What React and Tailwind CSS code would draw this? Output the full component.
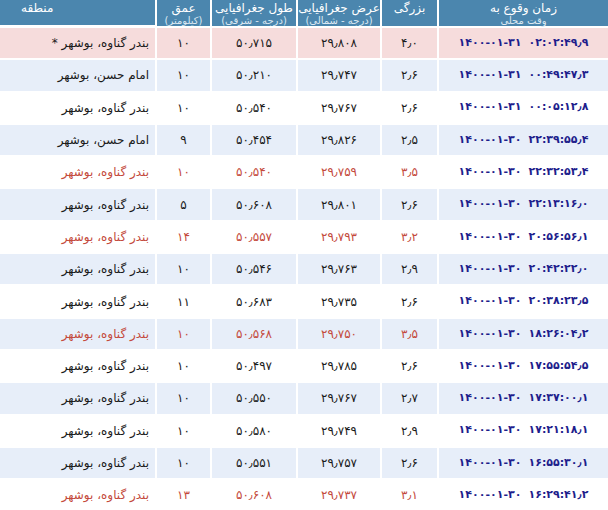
const rows = [
  ['۱۴۰۰-۰۱-۳۱ ۰۲:۰۲:۴۹٫۹', '۴٫۰', '۲۹٫۸۰۸', '۵۰٫۷۱۵', '۱۰', 'بندر گناوه، بوشهر *', 'pink'],
  ['۱۴۰۰-۰۱-۳۱ ۰۰:۴۹:۴۷٫۳', '۲٫۶', '۲۹٫۷۴۷', '۵۰٫۲۱۰', '۱۰', 'امام حسن، بوشهر', ''],
  ['۱۴۰۰-۰۱-۳۱ ۰۰:۰۵:۱۲٫۸', '۲٫۶', '۲۹٫۷۶۷', '۵۰٫۵۴۰', '۱۰', 'بندر گناوه، بوشهر', ''],
  ['۱۴۰۰-۰۱-۳۰ ۲۲:۳۹:۵۵٫۴', '۲٫۵', '۲۹٫۸۲۶', '۵۰٫۴۵۴', '۹', 'امام حسن، بوشهر', ''],
  ['۱۴۰۰-۰۱-۳۰ ۲۲:۳۲:۵۳٫۴', '۳٫۵', '۲۹٫۷۵۹', '۵۰٫۵۴۰', '۱۰', 'بندر گناوه، بوشهر', 'red'],
  ['۱۴۰۰-۰۱-۳۰ ۲۲:۱۳:۱۶٫۰', '۲٫۶', '۲۹٫۸۰۱', '۵۰٫۶۰۸', '۵', 'بندر گناوه، بوشهر', ''],
  ['۱۴۰۰-۰۱-۳۰ ۲۰:۵۶:۵۶٫۱', '۳٫۲', '۲۹٫۷۹۳', '۵۰٫۵۵۷', '۱۴', 'بندر گناوه، بوشهر', 'red'],
  ['۱۴۰۰-۰۱-۳۰ ۲۰:۴۲:۲۲٫۰', '۲٫۹', '۲۹٫۷۶۳', '۵۰٫۵۴۶', '۱۰', 'بندر گناوه، بوشهر', ''],
  ['۱۴۰۰-۰۱-۳۰ ۲۰:۳۸:۲۳٫۵', '۲٫۶', '۲۹٫۷۳۵', '۵۰٫۶۸۳', '۱۱', 'بندر گناوه، بوشهر', ''],
  ['۱۴۰۰-۰۱-۳۰ ۱۸:۲۶:۰۴٫۲', '۳٫۵', '۲۹٫۷۵۰', '۵۰٫۵۶۸', '۱۰', 'بندر گناوه، بوشهر', 'red'],
  ['۱۴۰۰-۰۱-۳۰ ۱۷:۵۵:۵۴٫۵', '۲٫۶', '۲۹٫۷۸۵', '۵۰٫۴۹۷', '۱۰', 'بندر گناوه، بوشهر', ''],
  ['۱۴۰۰-۰۱-۳۰ ۱۷:۳۷:۰۰٫۱', '۲٫۷', '۲۹٫۷۶۷', '۵۰٫۵۵۰', '۱۰', 'بندر گناوه، بوشهر', ''],
  ['۱۴۰۰-۰۱-۳۰ ۱۷:۲۱:۱۸٫۱', '۲٫۹', '۲۹٫۷۴۹', '۵۰٫۵۸۰', '۱۰', 'بندر گناوه، بوشهر', ''],
  ['۱۴۰۰-۰۱-۳۰ ۱۶:۵۵:۳۰٫۱', '۲٫۶', '۲۹٫۷۵۷', '۵۰٫۵۵۱', '۱۰', 'بندر گناوه، بوشهر', ''],
  ['۱۴۰۰-۰۱-۳۰ ۱۶:۲۹:۴۱٫۲', '۳٫۱', '۲۹٫۷۳۷', '۵۰٫۶۰۸', '۱۳', 'بندر گناوه، بوشهر', 'red'],
];

const HeadCell = ({ title, sub, className = '' }) => (
  <div className={`bg-[#4b86ae] text-white text-center pt-[2px] ${className}`}>
    <div dir="rtl" className="text-[12px] leading-[13px]">{title}</div>
    {sub && <div dir="rtl" className="text-[10px] leading-[11px] text-[#dbe8f2]">{sub}</div>}
  </div>
);

const Row = ({ data, index }) => {
  const [time, mag, lat, lon, depth, region, kind] = data;
  const [date, clock] = time.split(' ');
  const bg = kind === 'pink' ? 'bg-[#f6dcdc]' : index % 2 === 1 ? 'bg-[#e7eef9]' : 'bg-white';
  const text = kind === 'red' ? 'text-[#c44a3c]' : 'text-[#1a1a1a]';
  const cell = `${bg} h-[30.3px] flex items-center`;

  return (
    <>
      <div className={`${cell} pr-[6px] ${text} text-[12px]`} dir="rtl">
        <span className="w-full text-right">{region}</span>
      </div>
      <div className={`${cell} justify-center ${text} text-[12px]`} dir="ltr">{depth}</div>
      <div className={`${cell} justify-center ${text} text-[12px]`} dir="ltr">{lon}</div>
      <div className={`${cell} justify-center ${text} text-[12px]`} dir="ltr">{lat}</div>
      <div className={`${cell} justify-center ${text} text-[12px]`} dir="ltr">{mag}</div>
      <div className={`${cell} justify-center gap-[7px] text-[#1e1e8c] font-bold text-[11px]`} dir="ltr">
        <span>{date}</span>
        <span>{clock}</span>
      </div>
    </>
  );
};

export default function App() {
  return (
    <div className="w-[608px] h-[510px] overflow-hidden bg-white font-['DejaVu_Sans',sans-serif]">
      <div className="grid grid-cols-[155px_53px_84px_82px_55px_169px] gap-[2px]">
        <div className="bg-[#4b86ae] text-white text-[12px] leading-[13px] h-[25px] pt-[2px] pl-[21px] text-left" dir="ltr">
          <span dir="rtl">منطقه</span>
        </div>
        <HeadCell title="عمق" sub="(کیلومتر)" />
        <HeadCell title="طول جغرافیایی" sub="(درجه - شرقی)" />
        <HeadCell title="عرض جغرافیایی" sub="(درجه - شمالی)" />
        <HeadCell title="بزرگی" />
        <HeadCell title="زمان وقوع به" sub="وقت محلی" />
        {rows.map((r, i) => (
          <Row key={i} data={r} index={i} />
        ))}
      </div>
    </div>
  );
}
